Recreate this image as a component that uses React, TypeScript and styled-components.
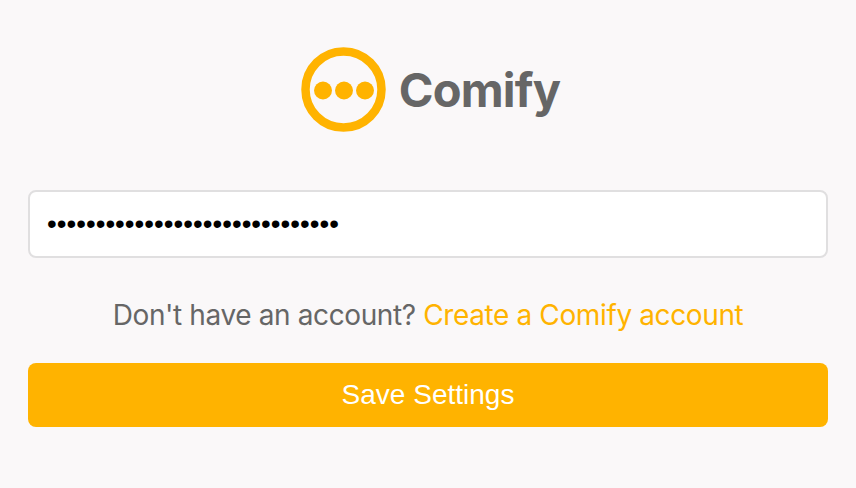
import { createGlobalStyle } from "styled-components";
import styled from "styled-components";

const GlobalStyle = createGlobalStyle`
  html, body {
    margin: 0;
    padding: 0;
    background: #faf8f9;
  }
`;

const Page = styled.div`
  box-sizing: border-box;
  width: 856px;
  height: 488px;
  padding: 47px 28px 0;
  display: flex;
  flex-direction: column;
  font-family: Inter, "Liberation Sans", sans-serif;
  overflow: hidden;
`;

const Brand = styled.div`
  display: flex;
  align-items: center;
  justify-content: center;
  gap: 13px;
  height: 85px;
  margin-left: 5px;
`;

const BrandName = styled.span`
  font-size: 47px;
  font-weight: 700;
  letter-spacing: -0.8px;
  color: #666666;
`;

const LogoMark = styled.svg`
  width: 85px;
  height: 85px;
  filter: blur(0.6px);
`;

const PasswordInput = styled.input`
  box-sizing: border-box;
  width: 100%;
  height: 68px;
  margin-top: 58px;
  padding: 0 17px;
  background: #ffffff;
  border: 2px solid #e0dfe0;
  border-radius: 8px;
  outline: none;
  color: #000000;
  font-family: "Liberation Sans", sans-serif;
  font-size: 27.8px;
`;

const Prompt = styled.p`
  margin: 41px 0 0;
  height: 32px;
  line-height: 32px;
  text-align: center;
  font-size: 28px;
  letter-spacing: -0.38px;
  color: #666666;
`;

const PromptLink = styled.a`
  color: #ffb300;
  text-decoration: none;
`;

const SaveButton = styled.button`
  width: 100%;
  height: 64px;
  margin-top: 32px;
  border: none;
  border-radius: 8px;
  background: #ffb300;
  color: #ffffff;
  font-family: "Liberation Sans", sans-serif;
  font-size: 28px;
`;

function Logo() {
  return (
    <LogoMark viewBox="0 0 85 85" aria-hidden="true">
      <circle cx="42.5" cy="42.5" r="38" fill="none" stroke="#ffb300" strokeWidth="8.5" />
      <circle cx="22" cy="43.5" r="9" fill="#ffb300" />
      <circle cx="43" cy="43.5" r="9" fill="#ffb300" />
      <circle cx="64" cy="43.5" r="9" fill="#ffb300" />
    </LogoMark>
  );
}

export default function App() {
  return (
    <>
      <GlobalStyle />
      <Page>
        <Brand>
          <Logo />
          <BrandName>Comify</BrandName>
        </Brand>
        <PasswordInput type="password" value="abcdefghijklmnopqrstuvwxyz1234" readOnly />
        <Prompt>
          Don't have an account? <PromptLink href="#">Create a Comify account</PromptLink>
        </Prompt>
        <SaveButton type="button">Save Settings</SaveButton>
      </Page>
    </>
  );
}
